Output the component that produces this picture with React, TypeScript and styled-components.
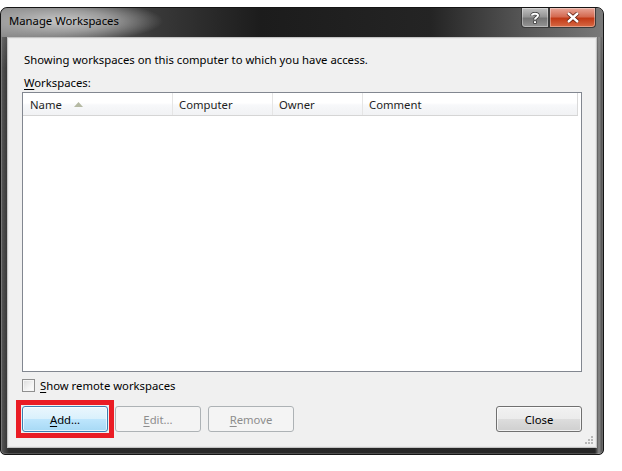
import React from 'react'
import styled, { createGlobalStyle } from 'styled-components'

const GlobalStyle = createGlobalStyle`
    html, body {
        margin: 0;
        padding: 0;
        background: #ffffff;
        font-family: "Segoe UI", "Noto Sans", "Open Sans", sans-serif;
        font-size: 11.3px;
        color: #000;
    }
`;

export const Page = styled.div`
    padding-top: 7px;
    width: 622px;
    height: 464px;
`;

export const DialogWindow = styled.div`
    position: relative;
    width: 604px;
    height: 448px;
    box-sizing: border-box;
    border: 1px solid #151515;
    border-radius: 7px 7px 5px 5px;
    background:
        linear-gradient(180deg, rgba(150,150,150,0.55) 0px, rgba(90,90,90,0) 60px),
        linear-gradient(90deg, #5a5a5a 0px, #2c2c2c 8px, #262626 594px, #8a8a8a 598px, #2a2a2a 603px);
    box-shadow: inset 0 0 0 1px rgba(255,255,255,0.18);
    padding: 0 6px 6px 6px;
    display: flex;
    flex-direction: column;
`;

export const TitleBar = styled.div`
    height: 29px;
    display: flex;
    align-items: flex-start;
    justify-content: space-between;
    margin: 0 -6px;
    padding: 0 6px;
    border-radius: 7px 7px 0 0;
    background:
        radial-gradient(ellipse 100px 21px at 62px 13px, rgba(205,205,205,0.95) 0%, rgba(175,175,175,0.75) 50%, rgba(80,80,80,0) 100%),
        linear-gradient(90deg, #8a8a8a 0px, #3a3a3a 150px, #1c1c1c 260px, #242424 430px, #555555 520px, #7a7a7a 604px);
`;

export const TitleText = styled.div`
    margin-top: 5px;
    margin-left: 2px;
    color: #000;
    line-height: 16px;
`;

export const CaptionButtons = styled.div`
    display: flex;
    margin-right: 1px;
`;

export const CaptionButton = styled.div<{ $close?: boolean }>`
    width: ${p => p.$close ? '47px' : '28px'};
    height: 20px;
    box-sizing: border-box;
    border: 1px solid #3a3a3a;
    border-top: none;
    border-radius: ${p => p.$close ? '0 0 4px 0' : '0 0 0 4px'};
    background: ${p => p.$close
        ? 'linear-gradient(180deg, #e8a597 0%, #d46b52 45%, #c23a17 55%, #d86a45 100%)'
        : 'linear-gradient(180deg, #c0c0c0 0%, #959595 45%, #767676 55%, #959595 100%)'};
    box-shadow: inset 0 0 0 1px rgba(255,255,255,0.35);
    display: flex;
    align-items: center;
    justify-content: center;
`;

export const ClientArea = styled.div`
    flex: 1;
    background: #f0f0f0;
    border: 1px solid #c4c4c4;
    box-shadow: 0 0 0 1px #e8e8e8 inset;
    padding: 14px 14px 0 14px;
    display: flex;
    flex-direction: column;
    position: relative;
`;

export const InfoText = styled.div`
    line-height: 16px;
    height: 16px;
    margin-left: 2px;
`;

export const Label = styled.div`
    line-height: 16px;
    height: 16px;
    margin-top: 7px;
    margin-left: 2px;
`;

export const Ul = styled.span`
    text-decoration: underline;
    text-underline-offset: 2px;
`;

export const ListBox = styled.div`
    margin-top: 1px;
    height: 280px;
    box-sizing: border-box;
    border: 1px solid #828790;
    background: #fff;
`;

export const HeaderRow = styled.div`
    display: flex;
    height: 23px;
    box-sizing: border-box;
    width: 555px;
    background: linear-gradient(180deg, #ffffff 0%, #ffffff 45%, #f7f8fa 55%, #f1f2f4 100%);
    border-bottom: 1px solid #d5d5d5;
`;

export const HeaderCell = styled.div<{ $w: number }>`
    width: ${p => p.$w}px;
    box-sizing: border-box;
    padding-left: 6px;
    display: flex;
    align-items: center;
    color: #1e1e1e;
    border-right: 1px solid #e5e5e5;
    &:first-child {
        padding-left: 7px;
    }
    &:last-child {
        border-right: 1px solid #dadada;
    }
`;

export const SortArrow = styled.svg`
    margin-left: 12px;
`;

export const CheckRow = styled.div`
    display: flex;
    align-items: center;
    margin-top: 5px;
    height: 16px;
`;

export const CheckBox = styled.div`
    width: 13px;
    height: 13px;
    box-sizing: border-box;
    border: 1px solid #8f8f8f;
    background: linear-gradient(135deg, #dcdcdc 0%, #f4f4f4 60%, #ffffff 100%);
    box-shadow: inset 0 0 0 1px #f6f6f6;
    margin-right: 5px;
`;

export const ButtonRow = styled.div`
    display: flex;
    align-items: center;
    margin-top: 13px;
    gap: 7px;
`;

// red annotation frame drawn around the Add button, takes no layout space
export const Marker = styled.div`
    margin: -6px;
    padding: 1px;
    border: 5px solid #ea1c24;
    display: flex;
`;

export const Button = styled.div<{ $state?: 'focus' | 'disabled' | 'normal' }>`
    width: 86px;
    height: 26px;
    box-sizing: border-box;
    border-radius: 3px;
    display: flex;
    align-items: center;
    justify-content: center;
    border: 1px solid ${p => p.$state === 'focus' ? '#3c7fb1' : p.$state === 'disabled' ? '#adb2b5' : '#707070'};
    color: ${p => p.$state === 'disabled' ? '#8d8d8d' : '#000'};
    background: ${p => p.$state === 'focus'
        ? 'linear-gradient(180deg, #eaf6fd 0%, #d9f0fc 50%, #bee6fd 50%, #a7d9f5 100%)'
        : p.$state === 'disabled'
            ? '#f4f4f4'
            : 'linear-gradient(180deg, #f2f2f2 0%, #ebebeb 50%, #dddddd 50%, #cfcfcf 100%)'};
    box-shadow: ${p => p.$state === 'disabled' ? 'none' : 'inset 0 0 0 1px rgba(255,255,255,0.7)'};
`;

export const Spacer = styled.div`
    flex: 1;
`;

export const Grip = styled.svg`
    position: absolute;
    right: 2px;
    bottom: 2px;
`;

const columns = [
    { name: 'Name', w: 150, arrow: true },
    { name: 'Computer', w: 100 },
    { name: 'Owner', w: 90 },
    { name: 'Comment', w: 215 },
];

export default function App() {
    return (
        <Page>
            <GlobalStyle />
            <DialogWindow>
                <TitleBar>
                    <TitleText>Manage Workspaces</TitleText>
                    <CaptionButtons>
                        <CaptionButton>
                            <svg width="10" height="12" viewBox="0 0 10 12">
                                <path d="M2 3.5 C2 1 8 1 8 3.5 C8 5.5 5 5.5 5 7.5" stroke="#3a3a3a" strokeWidth="3.4" fill="none" />
                                <rect x="3.3" y="8.5" width="3.4" height="3.2" fill="#3a3a3a" />
                                <path d="M2 3.5 C2 1 8 1 8 3.5 C8 5.5 5 5.5 5 7.5" stroke="#fff" strokeWidth="2" fill="none" />
                                <rect x="4" y="9.2" width="2" height="1.8" fill="#fff" />
                            </svg>
                        </CaptionButton>
                        <CaptionButton $close>
                            <svg width="14" height="11" viewBox="0 0 14 11">
                                <path d="M2 1 L12 10 M12 1 L2 10" stroke="#5a1a0c" strokeWidth="4" />
                                <path d="M2 1 L12 10 M12 1 L2 10" stroke="#fff" strokeWidth="2.4" />
                            </svg>
                        </CaptionButton>
                    </CaptionButtons>
                </TitleBar>
                <ClientArea>
                    <InfoText>Showing workspaces on this computer to which you have access.</InfoText>
                    <Label><Ul>W</Ul>orkspaces:</Label>
                    <ListBox>
                        <HeaderRow>
                            {columns.map(c => (
                                <HeaderCell key={c.name} $w={c.w}>
                                    {c.name}
                                    {c.arrow && (
                                        <SortArrow width="9" height="5" viewBox="0 0 9 5">
                                            <path d="M0 5 L4.5 0 L9 5 Z" fill="#b5b9a3" />
                                        </SortArrow>
                                    )}
                                </HeaderCell>
                            ))}
                        </HeaderRow>
                    </ListBox>
                    <CheckRow>
                        <CheckBox />
                        <span><Ul>S</Ul>how remote workspaces</span>
                    </CheckRow>
                    <ButtonRow>
                        <Marker>
                            <Button $state="focus"><span><Ul>A</Ul>dd...</span></Button>
                        </Marker>
                        <Button $state="disabled"><span><Ul>E</Ul>dit...</span></Button>
                        <Button $state="disabled"><span><Ul>R</Ul>emove</span></Button>
                        <Spacer />
                        <Button $state="normal">Close</Button>
                    </ButtonRow>
                    <Grip width="10" height="10" viewBox="0 0 10 10">
                        <rect x="7" y="1" width="2" height="2" fill="#b8b8b8" />
                        <rect x="4" y="4" width="2" height="2" fill="#b8b8b8" />
                        <rect x="7" y="4" width="2" height="2" fill="#b8b8b8" />
                        <rect x="1" y="7" width="2" height="2" fill="#b8b8b8" />
                        <rect x="4" y="7" width="2" height="2" fill="#b8b8b8" />
                        <rect x="7" y="7" width="2" height="2" fill="#b8b8b8" />
                    </Grip>
                </ClientArea>
            </DialogWindow>
        </Page>
    );
}
